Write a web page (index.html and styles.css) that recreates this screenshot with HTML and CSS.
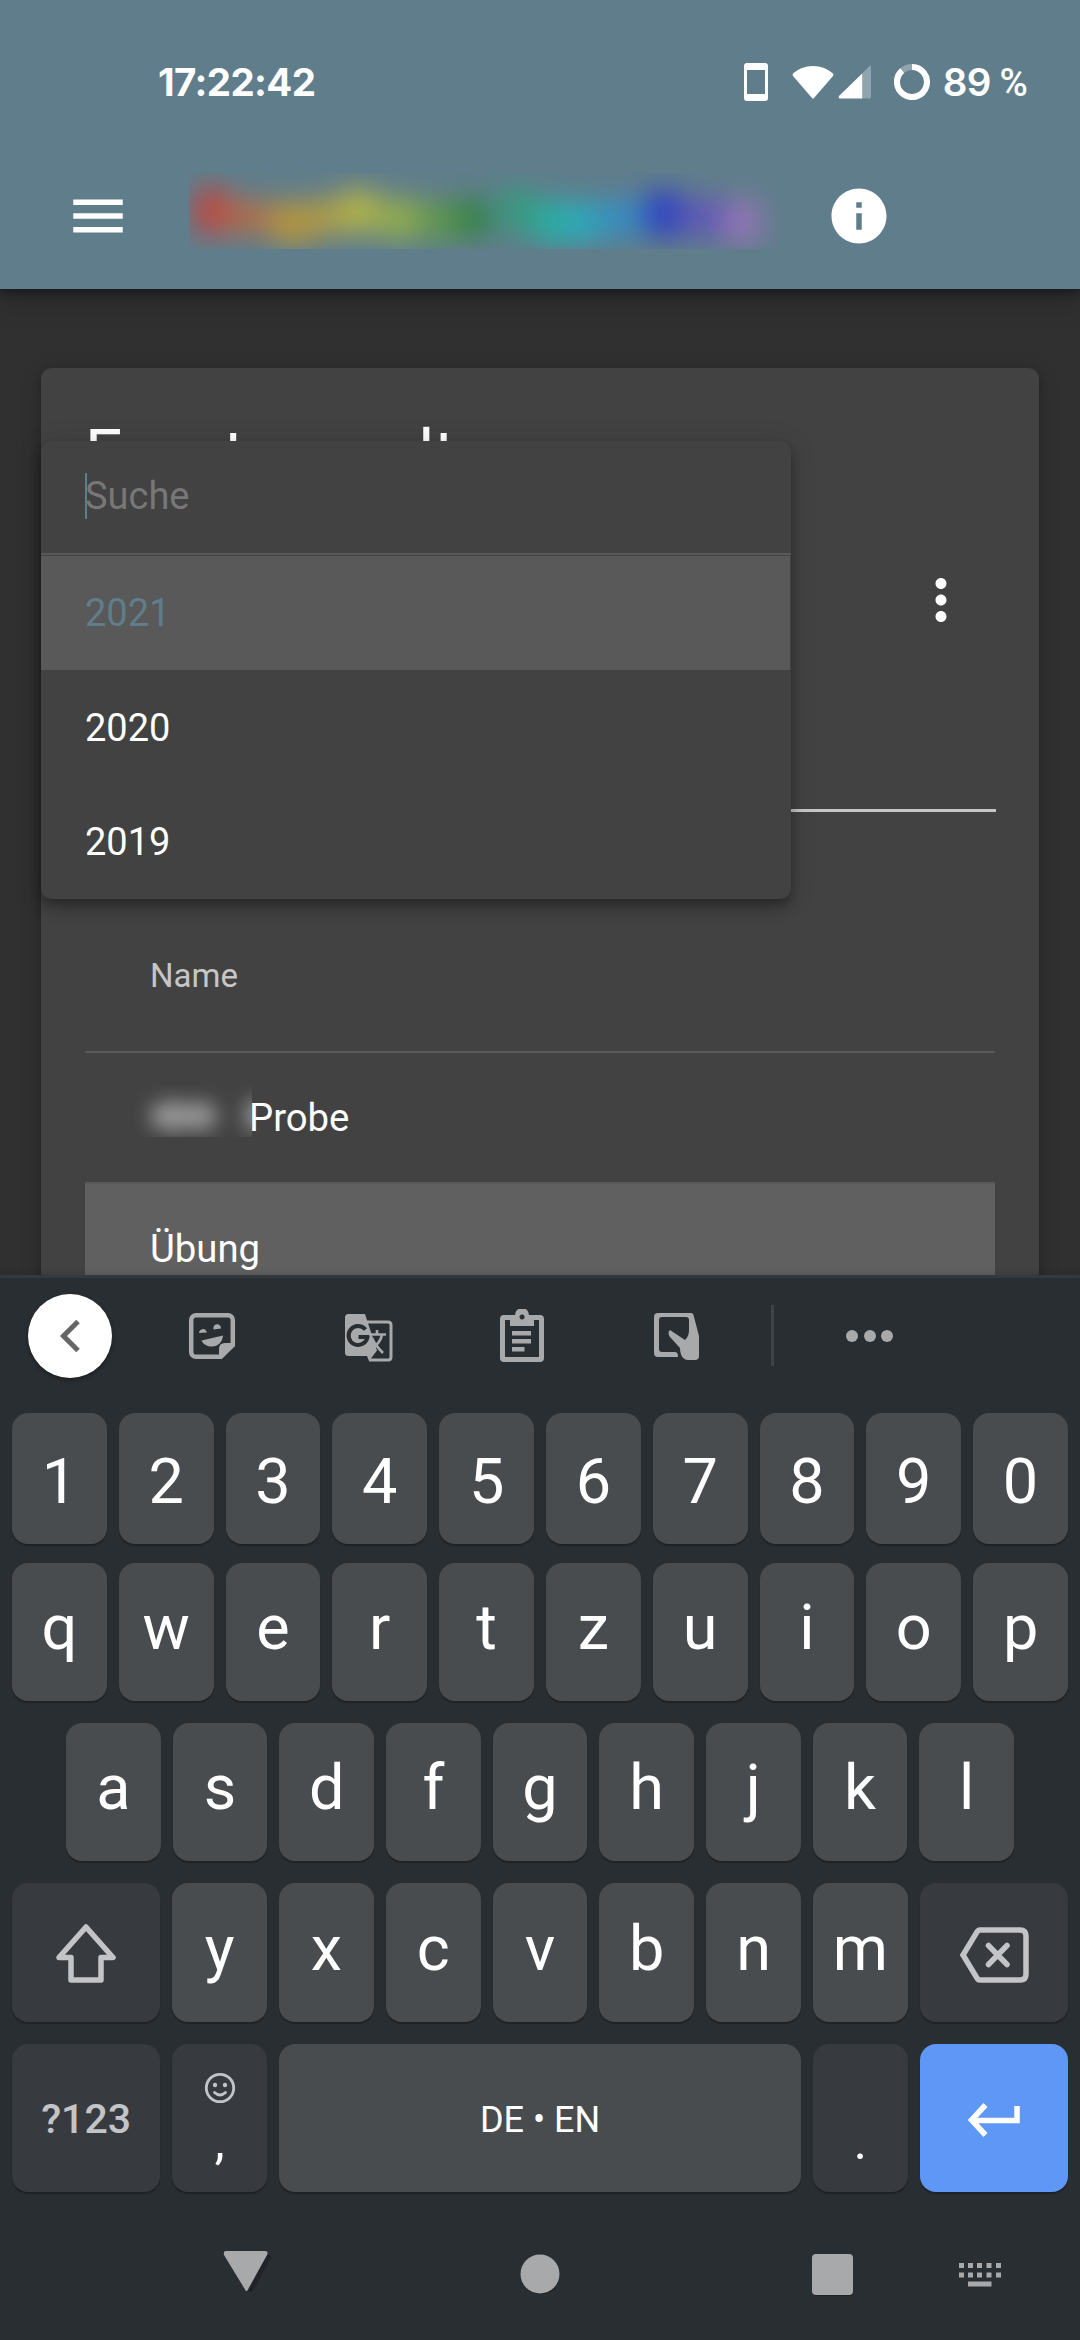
FILE: index.html
```html
<!DOCTYPE html>
<html lang="de">
<head>
<meta charset="utf-8">
<title>Eventverwaltung</title>
<link rel="stylesheet" href="styles.css">
</head>
<body>
<div class="phone">
  <header class="header">
    <div class="status">
      <span class="clock">17:22:42</span>
      <div class="status-icons">
        <svg class="st-phone" width="26" height="40" viewBox="0 0 26 40"><path fill="#fff" fill-rule="evenodd" d="M4 1h18q3 0 3 3v32q0 3-3 3H4q-3 0-3-3V4q0-3 3-3zM4 8v24h18V8z"/></svg>
        <svg class="st-wifi" width="42" height="34" viewBox="0 0 42 34"><path fill="#fff" d="M21 1C13 1 6 4 1 8.500Q0 10 1 11L20 33Q21 34 22 33L41 11Q42 10 41 8.500C36 4 29 1 21 1z"/></svg>
        <svg class="st-cell" width="34" height="34" viewBox="0 0 34 34"><path fill="#fff" fill-opacity=".3" d="M24 8.500L31 1.500Q33 0 33 2V32q0 1.500-1.500 1.500H24z"/><path fill="#fff" d="M24.200 8.500V33.500H2Q0 33 1 31z"/></svg>
        <svg class="st-bat" width="36" height="36" viewBox="0 0 36 36"><g fill="none" stroke="#fff" stroke-width="6"><circle cx="18" cy="18" r="15" stroke-opacity=".3"/><path d="M18 3A15 15 0 1 1 8.200 6.600"/></g></svg>
        <span class="percent">89 <span class="sign">%</span></span>
      </div>
    </div>
    <div class="appbar">
      <svg class="menu-icon" width="66" height="66" viewBox="0 0 24 24"><path fill="#fff" d="M3 18h18v-2H3v2zm0-5h18v-2H3v2zm0-7v2h18V6H3z"/></svg>
      <svg class="brand" width="590" height="76" viewBox="0 0 590 76">
        <defs><filter id="soft" x="-20%" y="-60%" width="140%" height="220%"><feGaussianBlur stdDeviation="14"/></filter></defs>
        <g filter="url(#soft)">
          <ellipse cx="23" cy="38" rx="19" ry="25" fill="#c2443c"/>
          <ellipse cx="60" cy="44" rx="26" ry="18" fill="#b06c4c"/>
          <ellipse cx="104" cy="50" rx="26" ry="22" fill="#b8953a"/>
          <ellipse cx="138" cy="44" rx="22" ry="20" fill="#ab9a48"/>
          <ellipse cx="170" cy="38" rx="22" ry="23" fill="#b2b348"/>
          <ellipse cx="210" cy="46" rx="26" ry="22" fill="#90ac50"/>
          <ellipse cx="250" cy="48" rx="23" ry="21" fill="#5f9850"/>
          <ellipse cx="283" cy="45" rx="20" ry="20" fill="#338443"/>
          <ellipse cx="328" cy="37" rx="20" ry="25" fill="#379a7d"/>
          <ellipse cx="364" cy="49" rx="22" ry="23" fill="#28aea2"/>
          <ellipse cx="393" cy="49" rx="20" ry="22" fill="#2aabbb"/>
          <ellipse cx="430" cy="45" rx="24" ry="20" fill="#348ec2"/>
          <ellipse cx="475" cy="41" rx="25" ry="25" fill="#3144c2"/>
          <ellipse cx="519" cy="45" rx="26" ry="21" fill="#6059b6"/>
          <ellipse cx="554" cy="49" rx="19" ry="24" fill="#9474b8"/>
        </g>
      </svg>
      <svg class="info-icon" width="66" height="66" viewBox="0 0 24 24"><path fill="#fff" d="M12 2C6.480 2 2 6.480 2 12s4.480 10 10 10 10-4.480 10-10S17.520 2 12 2zm1 15h-2v-6h2v6zm0-8h-2V7h2v2z"/></svg>
    </div>
  </header>

  <main class="content">
    <section class="card">
      <h1 class="card-title">Eventverwaltung</h1>
      <div class="toolbar">
        <svg width="66" height="66" viewBox="0 0 24 24"><path fill="#fff" d="M12 8c1.100 0 2-.9 2-2s-.9-2-2-2-2 .9-2 2 .9 2 2 2zm0 2c-1.100 0-2 .9-2 2s.9 2 2 2 2-.9 2-2-.9-2-2-2zm0 6c-1.100 0-2 .9-2 2s.9 2 2 2 2-.9 2-2-.9-2-2-2z"/></svg>
      </div>
      <div class="select-field"></div>
      <div class="table">
        <div class="row head">Name</div>
        <div class="row"><svg class="redacted" width="118" height="52" viewBox="0 0 118 52">
          <defs><filter id="haze" x="-60%" y="-100%" width="220%" height="300%"><feGaussianBlur stdDeviation="9.500"/></filter></defs>
          <g fill="#999" filter="url(#haze)"><ellipse cx="38" cy="31" rx="22" ry="15"/><ellipse cx="66" cy="31" rx="17" ry="14"/><rect x="112" y="16" width="26" height="28"/></g>
        </svg><span class="probe">Probe</span></div>
        <div class="row even">Übung</div>
      </div>
      <div class="dropdown">
        <div class="search"><span class="caret"></span><span>Suche</span></div>
        <div class="option selected">2021</div>
        <div class="option">2020</div>
        <div class="option">2019</div>
      </div>
    </section>
  </main>

  <section class="keyboard">
    <div class="tools">
      <div class="back"><svg width="22" height="34" viewBox="0 0 22 34"><path fill="none" stroke="#666" stroke-width="5" d="M19 2.500L4.500 17 19 31.500"/></svg></div>
      <div class="tool"><svg width="48" height="48" viewBox="0 0 48 48"><path fill="none" stroke="#a7a9ab" stroke-width="4.500" d="M8 3.200h32a4.800 4.800 0 0 1 4.800 4.800v25L33 44.800H8A4.800 4.800 0 0 1 3.200 40V8A4.800 4.800 0 0 1 8 3.200z"/><g fill="#a7a9ab"><path d="M31 46V37q0-6 6-6h9zM11 21a4 4.500 0 0 1 7.500-1.500L19 20.500zM25.500 17.500a3.800 4.500 0 1 1 7.500-1.500v.5zM13.500 28.500L35 23.500C34.500 30 30 34.500 24 34.500c-4.500 0-8.500-2-10.500-6z"/></g></svg></div>
      <div class="tool"><svg class="nudge" width="50" height="50" viewBox="0 0 50 50"><path fill="none" stroke="#a7a9ab" stroke-width="3" d="M22 9h22q3 0 3 3v32q0 3-3 3H25"/><path fill="#a7a9ab" d="M4.500 1H21l12 36.500L25 48l-2-5H4.500Q1 43 1 39.500v-35Q1 1 4.500 1z"/><path fill="none" stroke="#292e32" stroke-width="4" d="M21.500 16.500A9.500 9.500 0 1 0 23.500 24H14.500"/><path fill="none" stroke="#a7a9ab" stroke-width="2.600" d="M25 21.500H42M33 17v4.500M38 21.500C37 28 32 33 27 36M28 25c2 5 7 11 11 15"/></svg></div>
      <div class="tool"><svg width="44" height="54" viewBox="0 0 44 54"><path fill="#a7a9ab" fill-rule="evenodd" d="M4 6h11a7 7 0 0 1 14 0h11q4 0 4 4v39q0 4-4 4H4q-4 0-4-4V10q0-4 4-4zM5 11v37h34V11h-5v6H10v-6zM22 5.500a2.500 2.500 0 1 0 .1 0zM12 22h19v4.500H12zM12 30h19v4.500H12zM12 38h12.500v4.500H12z"/></svg></div>
      <div class="tool"><svg width="46" height="48" viewBox="0 0 46 48"><path fill="#a7a9ab" fill-rule="evenodd" d="M4 1h33q2 0 2.500 2L45 24v20q0 4-4 4h-7c-5 0-8-5-8-12L16 25q-3-4 0-7l15 10c3-3 4-6 4-10V8q0-3-3-3H8Q5 5 5 8v29q0 3 3 3h13q3 0 3 5H4q-4 0-4-4V5q0-4 4-4z"/></svg></div>
      <div class="split"></div>
      <div class="more"><i></i><i></i><i></i></div>
    </div>

    <div class="keys digits"><div class="key">1</div><div class="key">2</div><div class="key">3</div><div class="key">4</div><div class="key">5</div><div class="key">6</div><div class="key">7</div><div class="key">8</div><div class="key">9</div><div class="key">0</div></div>
    <div class="keys"><div class="key">q</div><div class="key">w</div><div class="key">e</div><div class="key">r</div><div class="key">t</div><div class="key">z</div><div class="key">u</div><div class="key">i</div><div class="key">o</div><div class="key">p</div></div>
    <div class="keys middle"><div class="key">a</div><div class="key">s</div><div class="key">d</div><div class="key">f</div><div class="key">g</div><div class="key">h</div><div class="key">j</div><div class="key">k</div><div class="key">l</div></div>
    <div class="keys lower">
      <div class="key special"><svg width="64" height="62" viewBox="0 0 64 62"><path fill="none" stroke="#c3c4c7" stroke-width="5.500" stroke-linejoin="round" d="M32 5L59 35.500H47V58H17V35.500H5z"/></svg></div>
      <div class="key">y</div><div class="key">x</div><div class="key">c</div><div class="key">v</div><div class="key">b</div><div class="key">n</div><div class="key">m</div>
      <div class="key special delete"><svg width="72" height="58" viewBox="0 0 72 58"><g fill="none" stroke="#c3c4c7" stroke-width="5.500"><path d="M22 4H62q6 0 6 6V48q0 6-6 6H22q-2 0-3-2L5 29 19 6q1-2 3-2z"/><path stroke-linecap="round" d="M30.500 19.500l18.500 19M49 19.500l-18.500 19"/></g></svg></div>
    </div>
    <div class="keys bottom">
      <div class="key special symbols">?123</div>
      <div class="key dim comma"><svg width="32" height="32" viewBox="0 0 32 32"><g fill="none" stroke="#c3c4c7" stroke-width="2.800"><circle cx="16" cy="16" r="13.700"/><path stroke-linecap="round" d="M10.500 20.500q5.500 5 11 0"/></g><circle cx="11" cy="13" r="2.200" fill="#c3c4c7"/><circle cx="21" cy="13" r="2.200" fill="#c3c4c7"/></svg><span>,</span></div>
      <div class="key space">DE • EN</div>
      <div class="key dim dot"><span>.</span></div>
      <div class="key special enter"><svg width="54" height="34" viewBox="0 0 54 34"><path fill="none" stroke="#fff" stroke-width="5.500" d="M50 3v14.500H5M18.500 2L4.500 17l14 15"/></svg></div>
    </div>

    <nav class="nav">
      <svg class="n-back" width="50" height="44" viewBox="0 0 50 44"><path fill="#000" fill-opacity=".2" d="M8 5h38q3 0 2 3L30 41q-2 3-4 0z"/><path fill="#a7a9ab" d="M3 1h39q4 0 2 4L25 39.500q-1.500 3-3 0L1 5Q0 1 3 1z"/></svg>
      <svg class="n-home" width="40" height="42" viewBox="0 0 40 42"><circle cx="20.500" cy="21.500" r="19" fill-opacity=".25"/><circle cx="20" cy="20" r="19.500" fill="#a7a9ab"/></svg>
      <svg class="n-recent" width="44" height="44" viewBox="0 0 44 44"><rect x="2" y="3" width="40" height="40" rx="4" fill-opacity=".25"/><rect x="1" y="1" width="41" height="41" rx="4" fill="#a7a9ab"/></svg>
      <svg class="n-kbd" width="42" height="24" viewBox="0 0 42 24"><path fill="#a7a9ab" d="M0 0h5v5H0zM9 0h5v5H9zM18 0h5v5h-5zM27.500 0h5v5h-5zM37 0h5v5h-5zM0 9.500h5v5H0zM9 9.500h5v5H9zM18 9.500h5v5h-5zM27.500 9.500h5v5h-5zM37 9.500h5v5h-5zM9 18.500h23.500v5H9z"/></svg>
    </nav>
  </section>
</div>
</body>
</html>
```

FILE: styles.css
```css
* { box-sizing: border-box; }
body { margin: 0; background: #303030; color: #fff; font-family: Roboto, sans-serif; }
svg { display: block; flex: none; }
.phone { width: 1080px; height: 2340px; display: flex; flex-direction: column; overflow: hidden; }

.header { height: 289px; flex: none; background: #607d8b; z-index: 1; box-shadow: 0 4px 8px rgba(0,0,0,.35), 0 8px 28px rgba(0,0,0,.25); }
.status { height: 164px; padding: 0 53px 0 158px; display: flex; align-items: center; justify-content: space-between; font-family: Inter, sans-serif; font-size: 38.5px; }
.clock { font-weight: 700; letter-spacing: -.6px; }
.status-icons { display: flex; align-items: center; }
.st-wifi { margin-left: 23px; }
.st-cell { margin-left: 4px; }
.st-bat { margin-left: 22px; }
.percent { margin-left: 13px; font-weight: 600; letter-spacing: -.8px; }
.sign { font-family: Roboto, sans-serif; font-weight: 500; }
.appbar { height: 103px; display: flex; align-items: center; padding-left: 65px; }
.brand { margin-left: 58px; margin-top: -10px; }
.info-icon { margin-left: 47px; }

.content { flex: 1; min-height: 0; padding: 79px 41px 0; overflow: hidden; background: #303030; }
.card { position: relative; height: 1100px; padding: 43px 44px 0; border-radius: 11px; background: #424242; box-shadow: 0 6px 5px -3px rgba(0,0,0,.2), 0 3px 8px rgba(0,0,0,.14), 0 3px 22px rgba(0,0,0,.14); }
.card-title { margin: 0; font-size: 66px; font-weight: 400; line-height: 88px; letter-spacing: -.3px; }
.toolbar { height: 201px; padding-right: 21px; display: flex; align-items: center; justify-content: flex-end; }
.select-field { height: 112px; margin: 0 -1px 87px 0; border-bottom: 3px solid #c6c6c6; }
.row { height: 131px; padding-left: 65px; display: flex; align-items: center; border-bottom: 2px solid #595959; font-size: 38.3px; }
.row.head { height: 154px; font-size: 33px; color: #c6c6c6; }
.row.even { background: #606060; }
.redacted { margin: -14px 0 0 -16px; }
.probe { margin-left: -3px; clip-path: inset(0 0 0 3px); }

.dropdown { position: absolute; left: 0; top: 73px; width: 750px; height: 458px; padding-right: 1px; border-radius: 11px; background: #424242; box-shadow: 0 6px 11px -2px rgba(0,0,0,.24), 0 10px 14px rgba(0,0,0,.14), 0 3px 27px rgba(0,0,0,.14); font-size: 38px; }
.search { height: 114px; margin: 0 -1px 1px 0; padding: 0 44px 3px; display: flex; align-items: center; border-bottom: 2px solid #595959; color: #777; }
.caret { width: 2px; height: 46px; margin-right: -2px; background: #607d8b; }
.option { height: 114.4px; padding-left: 44px; display: flex; align-items: center; }
.option.selected { background: #595959; color: #607d8b; }

.keyboard { height: 1065px; flex: none; z-index: 1; border-top: 3px solid #33393d; background: #292e32; box-shadow: 0 -1px 8px rgba(0,0,0,.12); }
.tools { height: 115px; margin-bottom: 20px; padding-left: 28px; display: flex; align-items: center; }
.back { width: 84px; height: 84px; margin-right: 22px; border-radius: 50%; background: #fff; display: flex; align-items: center; justify-content: center; box-shadow: 0 2px 4px rgba(0,0,0,.35); }
.tool { width: 155px; display: flex; justify-content: center; }
.nudge { margin: 4px 0 0 4px; }
.split { width: 3px; height: 61px; margin-left: 17px; background: #3e4347; }
.more { width: 191px; display: flex; justify-content: center; gap: 5.500px; }
.more i { width: 12px; height: 12px; border-radius: 50%; background: #a7a9ab; }

.keys { height: 138px; margin-bottom: 22px; padding: 0 12px; display: flex; gap: 12px; font-size: 63px; line-height: 1; }
.key { flex: 1 1 0; display: flex; align-items: center; justify-content: center; padding-bottom: 9px; border-radius: 16px; background: #484c4e; box-shadow: 0 2px 1px #1f2326; }
.digits { height: 131px; margin-bottom: 19px; }
.digits .key { padding: 6px 0 0; }
.middle { padding: 0 66px; }
.lower { height: 139px; }
.lower .special { padding: 0; }
.lower .delete { padding-top: 4px; }
.special { flex: 0 0 148.200px; background: #373b3f; }
.dim { flex: 0 0 94.800px; background: #373b3f; }
.bottom { height: 148px; margin-bottom: 0; }
.bottom .key { padding-bottom: 0; }
.bottom .symbols { padding-top: 2px; font-size: 41px; font-weight: 500; color: #c3c4c7; }
.bottom .space { padding-top: 3px; font-size: 36px; }
.bottom .comma { flex-direction: column; justify-content: flex-start; padding-top: 28px; font-size: 50px; }
.comma span { margin-top: 12px; }
.bottom .dot { align-items: flex-end; padding-bottom: 25px; font-size: 50px; }
.bottom .enter { padding-top: 4px; background: #5e97f6; }

.nav { height: 148px; padding-left: 223px; display: flex; align-items: flex-start; }
.n-back { margin-top: 58px; }
.n-home { margin: 62px 0 0 247px; }
.n-recent { margin: 61px 0 0 251px; }
.n-kbd { margin: 71px 0 0 104px; }
```
